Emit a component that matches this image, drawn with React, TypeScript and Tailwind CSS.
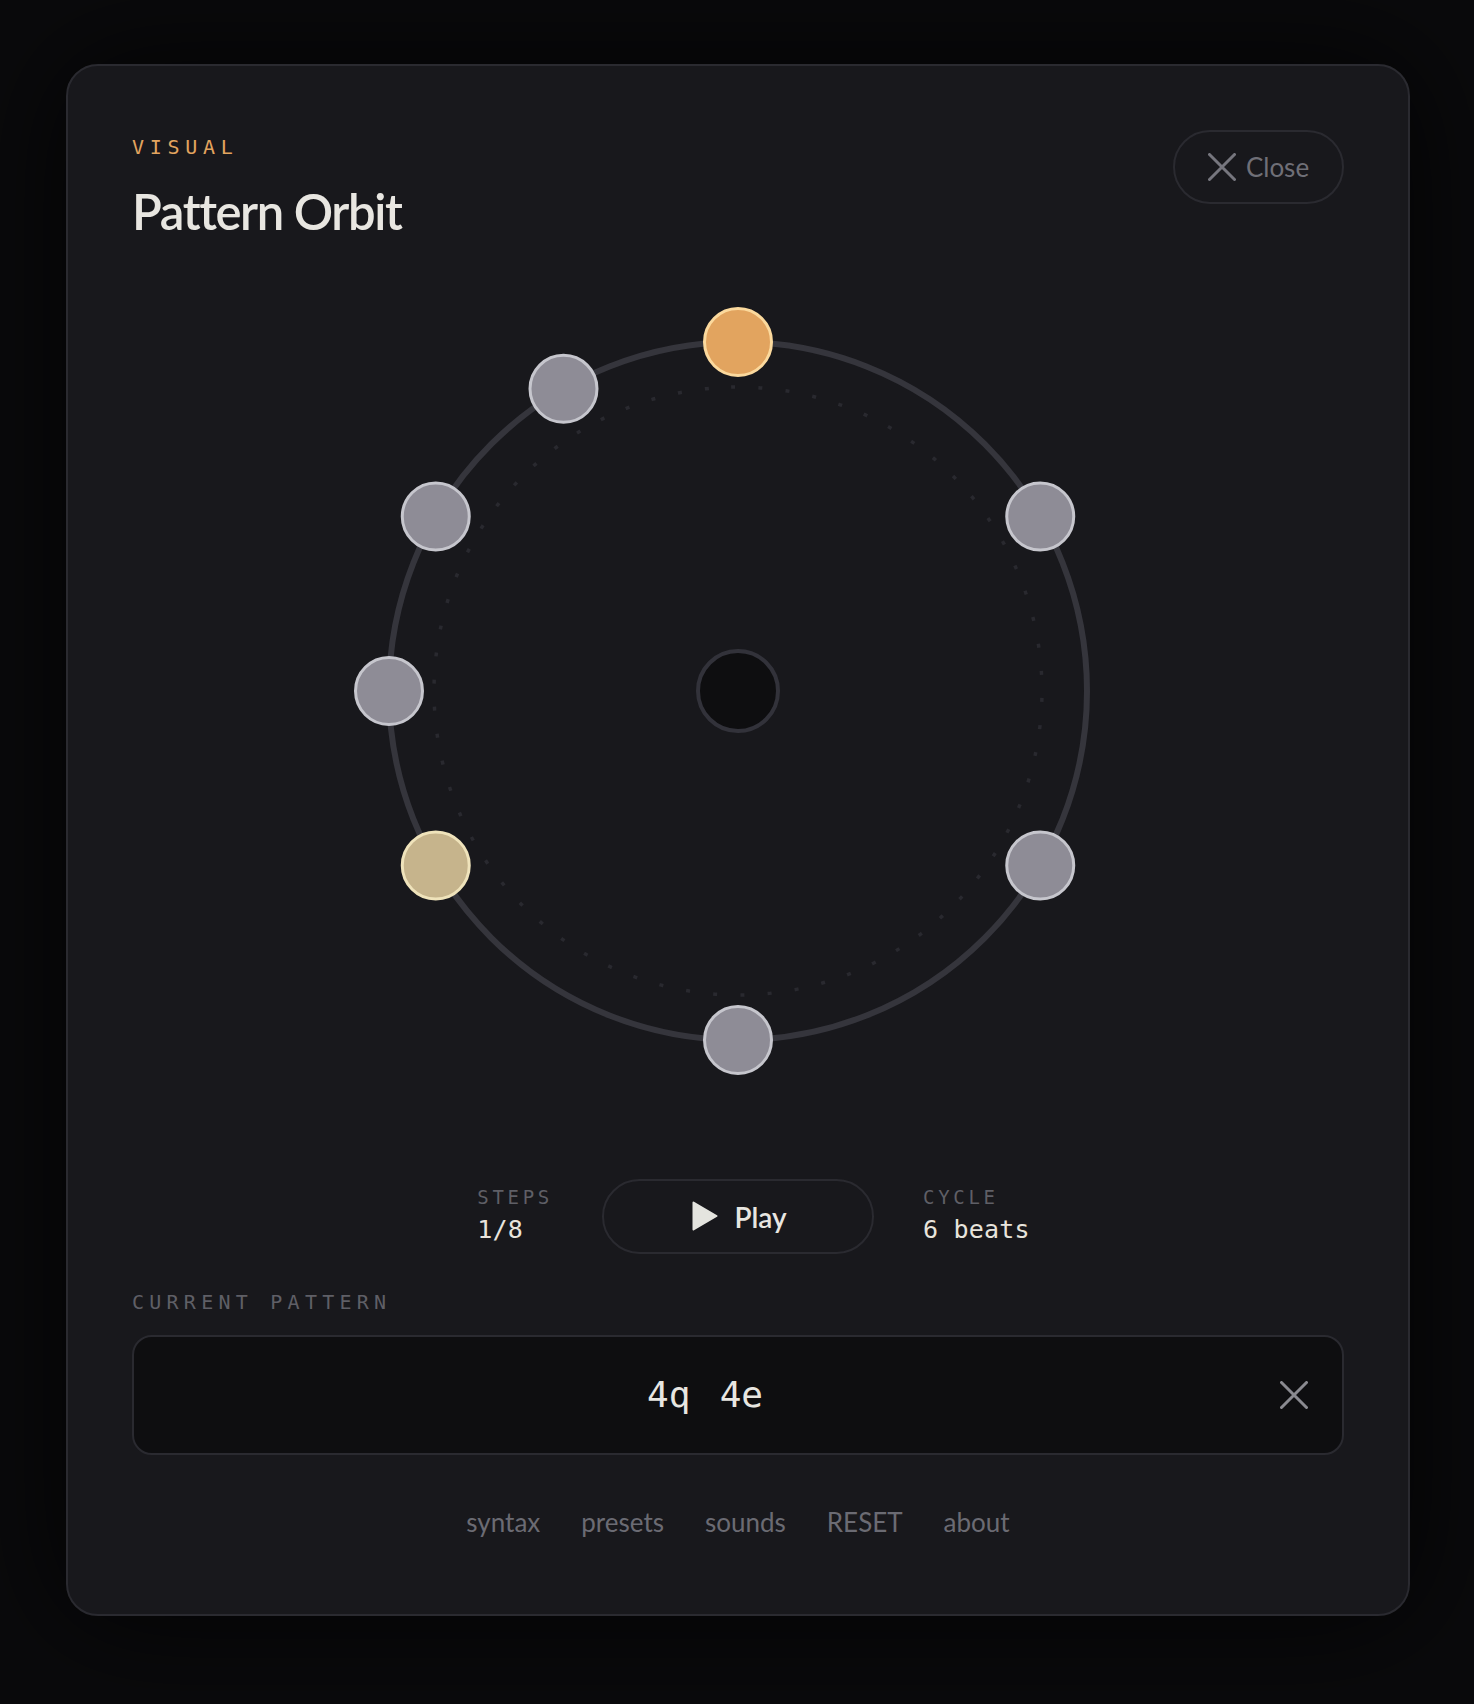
const sans = "font-['Lato','Noto_Sans',sans-serif]";
const mono = "font-['DejaVu_Sans_Mono','Liberation_Mono',monospace]";

const nodes = [
  { angle: 0, fill: "#e2a45f", stroke: "#fbd99d" },
  { angle: 60 },
  { angle: 120 },
  { angle: 180 },
  { angle: 240, fill: "#c6b48c", stroke: "#efe3bb" },
  { angle: 270 },
  { angle: 300 },
  { angle: 330 },
];

function CrossIcon({ size, color }: { size: number; color: string }) {
  return (
    <svg width={size} height={size} viewBox="0 0 28 28" fill="none" stroke={color} strokeWidth="3" strokeLinecap="round">
      <path d="M1.5 1.5 L26.5 26.5 M26.5 1.5 L1.5 26.5" />
    </svg>
  );
}

function Orbit() {
  const c = 390;
  const r = 349;
  return (
    <svg width="780" height="780" viewBox="0 0 780 780" fill="none">
      <circle cx={c} cy={c} r={r} stroke="#35353c" strokeWidth="6" />
      <circle
        cx={c}
        cy={c}
        r="304"
        stroke="#29292f"
        strokeWidth="3.5"
        strokeDasharray="4 23.29"
        transform={`rotate(-91.3 ${c} ${c})`}
      />
      <circle cx={c} cy={c} r="40" fill="#0e0e10" stroke="#32323a" strokeWidth="4" />
      {nodes.map((n) => {
        const a = (n.angle * Math.PI) / 180;
        return (
          <circle
            key={n.angle}
            cx={c + r * Math.sin(a)}
            cy={c - r * Math.cos(a)}
            r="33.5"
            fill={n.fill ?? "#8e8c96"}
            stroke={n.stroke ?? "#c6c6cd"}
            strokeWidth="3"
          />
        );
      })}
    </svg>
  );
}

function Stat({ label, value }: { label: string; value: string }) {
  return (
    <div className={`flex flex-col pb-[2px] ${mono}`}>
      <span className="text-[19px] leading-[24px] tracking-[3.7px] text-[#5f5f66]">{label}</span>
      <span className="mt-[5px] text-[25px] leading-[32px] tracking-[0.2px] text-[#e8e4dc]">{value}</span>
    </div>
  );
}

export default function App() {
  return (
    <div className={`flex min-h-[1704px] justify-center bg-[#0a0a0c] pl-[2px] pt-[64px] ${sans}`}>
      <div className="flex h-[1552px] w-[1344px] flex-col rounded-[32px] border-2 border-[#2a2a30] bg-[#18181c] p-[64px] shadow-[0_0_120px_rgba(0,0,0,0.85)]">
        <header className="flex h-[171px] items-start justify-between">
          <div>
            <div className={`mt-[5px] text-[20px] leading-[24px] tracking-[5.7px] text-[#e2a45f] ${mono}`}>VISUAL</div>
            <h1 className="mt-[24px] text-[49px] font-semibold leading-[56px] tracking-[-1.4px] text-[#e8e6e1]">Pattern Orbit</h1>
          </div>
          <button className="flex h-[74px] w-[171px] items-center justify-center gap-[10px] rounded-full border-2 border-[#2a2a30] text-[26px] text-[#6f6f77]">
            <CrossIcon size={28} color="#76767e" />
            Close
          </button>
        </header>

        <div className="flex justify-center">
          <Orbit />
        </div>

        <div className="mt-[98px] grid grid-cols-[1fr_272px_1fr] items-center gap-[49px]">
          <div className="flex justify-end">
            <Stat label="STEPS" value="1/8" />
          </div>
          <button className="flex h-[75px] items-center justify-center gap-[16px] rounded-full border-2 border-[#2a2a30] pl-[3px] text-[28px] font-semibold text-[#e8e6e1]">
            <svg width="26" height="30" viewBox="0 0 26 30" fill="#e4e4df" stroke="#e4e4df" strokeWidth="2" strokeLinejoin="round" className="-translate-y-[1px]">
              <path d="M1.5 1.5 L24.5 15 L1.5 28.5 Z" />
            </svg>
            Play
          </button>
          <div className="flex justify-start">
            <Stat label="CYCLE" value="6 beats" />
          </div>
        </div>

        <div className={`mt-[36px] text-[20px] leading-[24px] tracking-[5.25px] text-[#5f5f66] ${mono}`}>CURRENT PATTERN</div>

        <div className="relative mt-[21px] flex h-[120px] items-center justify-center rounded-[20px] border-2 border-[#2a2a30] bg-[#0e0e10] pr-[66px]">
          <span className={`whitespace-pre text-[36px] [word-spacing:-7px] text-[#e8e6e1] ${mono}`}>4q  4e</span>
          <button className="absolute right-[34px] top-[44px]">
            <CrossIcon size={28} color="#8a8a90" />
          </button>
        </div>

        <nav className="mt-[48px] flex justify-center gap-[41px] text-[26px] text-[#6b6b73]">
          <span>syntax</span>
          <span>presets</span>
          <span>sounds</span>
          <span>RESET</span>
          <span>about</span>
        </nav>
      </div>
    </div>
  );
}
